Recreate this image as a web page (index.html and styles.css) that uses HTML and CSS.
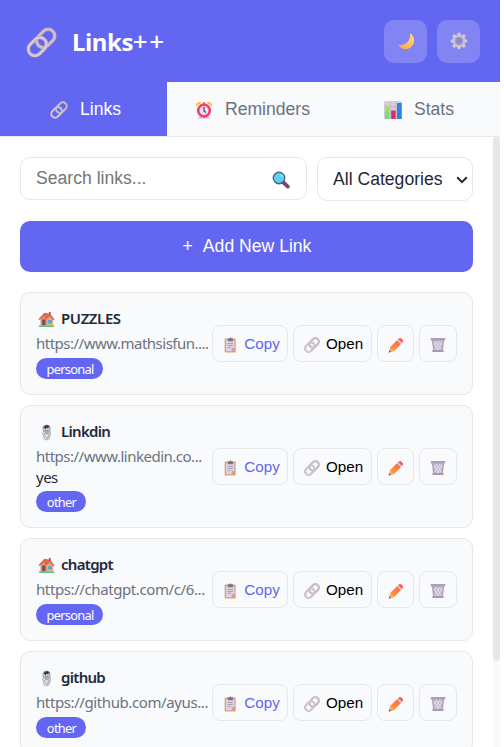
FILE: index.html
```html
<!DOCTYPE html>
<html lang="en">
<head>
<meta charset="utf-8">
<title>Links++</title>
<link rel="stylesheet" href="styles.css">
</head>
<body>
<svg class="sprite" aria-hidden="true">
  <defs>
    <linearGradient id="g-moon" x1="1" y1="0" x2="0" y2="1"><stop offset="0" stop-color="#ffe07a"/><stop offset="1" stop-color="#ff9d4a"/></linearGradient>
    <linearGradient id="g-green" x1="0" y1="0" x2="0" y2="1"><stop offset="0" stop-color="#b5dd55"/><stop offset="1" stop-color="#5de08c"/></linearGradient>
    <linearGradient id="g-pencil" x1="1" y1="0" x2="0" y2="1"><stop offset="0" stop-color="#ff5a4e"/><stop offset="1" stop-color="#ffa23a"/></linearGradient>
  </defs>
  <symbol id="link" viewBox="0 0 30 30">
    <g fill="none">
      <rect x="9.200" y="4.600" width="19.600" height="12.800" rx="6.400" transform="rotate(-45 19 11)" stroke="#b3a5b8" stroke-width="3.500"/>
      <rect x="9.200" y="4.600" width="19.600" height="12.800" rx="6.400" transform="rotate(-45 19 11)" stroke="#cbbecd" stroke-width="2.400"/>
      <rect x="1.200" y="12.600" width="19.600" height="12.800" rx="6.400" transform="rotate(-45 11 19)" stroke="#b3a5b8" stroke-width="3.500"/>
      <rect x="1.200" y="12.600" width="19.600" height="12.800" rx="6.400" transform="rotate(-45 11 19)" stroke="#d6cbd7" stroke-width="2.400"/>
    </g>
  </symbol>
  <symbol id="moon" viewBox="0 0 18 18"><path d="M13.200 1.200A8.600 8.600 0 1 1 1 12.600C8 14.400 14 9 13.200 1.200Z" fill="url(#g-moon)"/></symbol>
  <symbol id="gear" viewBox="0 0 18 18">
    <g stroke="#d3cadd" stroke-width="3.600" stroke-linecap="round"><path d="M9 2.400v13.200M2.400 9h13.200M4.200 4.200l9.600 9.600M13.800 4.200l-9.600 9.600"/></g>
    <circle cx="9" cy="9" r="6.300" fill="#cbc1d7"/><circle cx="9" cy="9" r="3.100" fill="#8486f3" stroke="#9d92ae" stroke-width="1.700"/>
  </symbol>
  <symbol id="clock" viewBox="0 0 18 18">
    <path d="M2.500 17.500l3-3h7l3 3z" fill="#d8b6e5"/>
    <path d="M.8 5.800C0 3 2.500.4 6.500 1.200ZM17.200 5.800C18 3 15.500.4 11.500 1.200Z" fill="#f9bd3b"/>
    <path d="M8 1h2v3H8z" fill="#e9a03b"/>
    <circle cx="9" cy="9.500" r="5.800" fill="#eee2f2" stroke="#f5416c" stroke-width="2.700"/>
    <path d="M9 6v4l1.800 1.500" fill="none" stroke="#514360" stroke-width="1.300"/>
  </symbol>
  <symbol id="chart" viewBox="0 0 18 18">
    <rect width="18" height="18" rx="1" fill="#d6cddd"/><path d="M0 6h18M0 12h18M6.500 0v18M12 0v18" stroke="#bfb2c8" stroke-width=".8"/>
    <rect x="1" y="4.500" width="4.500" height="13.500" fill="url(#g-green)"/><rect x="7.200" y="9.500" width="4.500" height="8.500" fill="#e0296f"/><rect x="13" y="2" width="4.700" height="16" fill="#2688e4"/>
  </symbol>
  <symbol id="search" viewBox="0 0 18 18">
    <path d="M11.500 11.500l4.300 4.100" stroke="#80437f" stroke-width="3.800" stroke-linecap="round"/>
    <circle cx="7" cy="7" r="5.700" fill="#5fd1ee" stroke="#47648f" stroke-width="1.400"/><path d="M9 3.500l2 2" stroke="#aeeafd" stroke-width="1.300"/>
  </symbol>
  <symbol id="clipboard" viewBox="0 0 16 18">
    <rect x="2" y="1.800" width="12.400" height="15.600" rx="1" fill="#df9e70"/><path d="M3.500 3.300h9.500v9L9.800 16H3.500z" fill="#ddd4e8"/><path d="M9.800 16v-3.700H13z" fill="#b6a3c6"/>
    <path d="M5.300 7.300h6M5.300 9.500h6M5.300 11.700h3.600" stroke="#9f91af" stroke-width=".9"/><path d="M5.500 1.800h1.600L8 .6h1l.8 1.200h1.600v3H5.500z" fill="#7c7085"/>
  </symbol>
  <symbol id="pencil" viewBox="0 0 18 18">
    <path d="M2.200 11.600l8.700-8.700 4.300 4.300-8.700 8.700z" fill="url(#g-pencil)"/><path d="M10 3.800l1.400-1.400 4.300 4.300-1.400 1.400z" fill="#d9c8da"/><path d="M11.400 2.400l1-.9q1.200-1 2.300 0l1.900 1.900q1 1.200 0 2.300l-1 1z" fill="#ff5b55"/>
    <path d="M2.200 11.600l4.300 4.300-5.500 1.400z" fill="#f3a563"/><path d="M1.500 15.200l1.600 1.600-2.400.7z" fill="#53435c"/>
  </symbol>
  <symbol id="trash" viewBox="0 0 18 18">
    <path d="M2 3.500h14L14.500 16h-11z" fill="#c2b8ce"/><path d="M4 6l7 10M7 5l6 9M11 5l3 4M14 6L7 16M11 5l-6 9M7 5L4.500 9" stroke="#ece7f1" stroke-width=".9"/>
    <path d="M3 4l1.500 11M15 4l-1.500 11" stroke="#9f95ae" stroke-width=".9"/><rect x=".8" y="1" width="16.400" height="2.800" rx=".7" fill="#aaa0b8"/><rect x="2.600" y="14.700" width="12.800" height="2.300" rx=".8" fill="#a69bb3"/>
  </symbol>
  <symbol id="house" viewBox="0 0 18 18">
    <rect x=".8" y="15" width="16.400" height="1.900" rx=".8" fill="#5bc486"/><path d="M2.600 7L7 3.500 15.900 8v7.300H2.600z" fill="#d99768"/><path d="M9 9l3.500-2.600L16 9v6.300H9z" fill="#e8aa7c"/>
    <rect x="4.400" y="9" width="3.500" height="6" fill="#775066"/><rect x="10.800" y="9.500" width="3.700" height="3.500" fill="#42abd9"/>
    <path d="M.5 8.400L6.800 1.800l6 1 4.700 6.200-1.200.8-4.200-4L8.500 9 6.700 5.400 1.500 9.400z" fill="#dc6650"/><path d="M11.500 1h2v3h-2z" fill="#a56052"/>
  </symbol>
  <symbol id="paperclip" viewBox="0 0 18 18">
    <path d="M5 9.500L6.600 16q2.400 1.800 4.800 0l2-6-1-4H6.500z" fill="#e5e6e8" stroke="#999ca2" stroke-width=".8"/>
    <path d="M7 12l1-4 1.500 3 1.500-3 .8 3-2 4.500z" fill="none" stroke="#8b8e95" stroke-width=".8"/>
    <ellipse cx="9" cy="4.800" rx="3.900" ry="3.700" fill="#d3d4d6" stroke="#85888e" stroke-width=".8"/><path d="M6 3.500q1.500-2.600 4-2.200 2 .2 2.700 2.300l-1.700-.7v2L9.300 3.700 8 5.500z" fill="#303238"/><path d="M7.300 6.200q1.500 1.800 3.500 0" stroke="#777" fill="none"/>
  </symbol>
</svg>
<div class="app">
  <header class="header">
    <svg class="logo"><use href="#link"/></svg>
    <h1>Links<span class="plus">++</span></h1>
    <div class="header-actions">
      <button class="round" aria-label="Dark mode"><svg class="icon"><use href="#moon"/></svg></button>
      <button class="round" aria-label="Settings"><svg class="icon"><use href="#gear"/></svg></button>
    </div>
  </header>
  <nav class="tabs">
    <button class="tab active"><svg class="icon"><use href="#link"/></svg><span>Links</span></button>
    <button class="tab"><svg class="icon"><use href="#clock"/></svg><span>Reminders</span></button>
    <button class="tab"><svg class="icon"><use href="#chart"/></svg><span>Stats</span></button>
  </nav>
  <div class="scroller">
    <main class="content">
      <div class="filters">
        <div class="search"><span>Search links...</span><svg class="icon"><use href="#search"/></svg></div>
        <div class="select"><span>All Categories</span><svg class="chevron" viewBox="0 0 12 8"><path d="M1.200 1.300L6 6.100l4.800-4.800"/></svg></div>
      </div>
      <button class="add"><span>+</span><span>Add New Link</span></button>
      <section class="list">
        <article class="card">
          <div class="info">
            <div class="name"><svg><use href="#house"/></svg><span class="n-puzzles">PUZZLES</span></div>
            <div class="url u-maths">https://www.mathsisfun....</div>
            <span class="tag personal">personal</span>
          </div>
          <div class="actions">
            <button class="btn copy"><svg><use href="#clipboard"/></svg><span>Copy</span></button>
            <button class="btn open"><svg><use href="#link"/></svg><span>Open</span></button>
            <button class="btn edit" aria-label="Edit"><svg><use href="#pencil"/></svg></button>
            <button class="btn del" aria-label="Delete"><svg><use href="#trash"/></svg></button>
          </div>
        </article>
        <article class="card">
          <div class="info">
            <div class="name"><svg><use href="#paperclip"/></svg><span>Linkdin</span></div>
            <div class="url u-linkedin">https://www.linkedin.co...</div>
            <div class="note">yes</div>
            <span class="tag other">other</span>
          </div>
          <div class="actions">
            <button class="btn copy"><svg><use href="#clipboard"/></svg><span>Copy</span></button>
            <button class="btn open"><svg><use href="#link"/></svg><span>Open</span></button>
            <button class="btn edit" aria-label="Edit"><svg><use href="#pencil"/></svg></button>
            <button class="btn del" aria-label="Delete"><svg><use href="#trash"/></svg></button>
          </div>
        </article>
        <article class="card">
          <div class="info">
            <div class="name"><svg><use href="#house"/></svg><span>chatgpt</span></div>
            <div class="url">https://chatgpt.com/c/6...</div>
            <span class="tag personal">personal</span>
          </div>
          <div class="actions">
            <button class="btn copy"><svg><use href="#clipboard"/></svg><span>Copy</span></button>
            <button class="btn open"><svg><use href="#link"/></svg><span>Open</span></button>
            <button class="btn edit" aria-label="Edit"><svg><use href="#pencil"/></svg></button>
            <button class="btn del" aria-label="Delete"><svg><use href="#trash"/></svg></button>
          </div>
        </article>
        <article class="card">
          <div class="info">
            <div class="name"><svg><use href="#paperclip"/></svg><span>github</span></div>
            <div class="url">https://github.com/ayus...</div>
            <span class="tag other">other</span>
          </div>
          <div class="actions">
            <button class="btn copy"><svg><use href="#clipboard"/></svg><span>Copy</span></button>
            <button class="btn open"><svg><use href="#link"/></svg><span>Open</span></button>
            <button class="btn edit" aria-label="Edit"><svg><use href="#pencil"/></svg></button>
            <button class="btn del" aria-label="Delete"><svg><use href="#trash"/></svg></button>
          </div>
        </article>
      </section>
    </main>
    <div class="track"><div class="thumb"></div></div>
  </div>
</div>
</body>
</html>
```
FILE: styles.css
```css
* { box-sizing: border-box; }
html, body { margin: 0; height: 100%; overflow: hidden; background: #fff; }
body { font-family: "Noto Sans", sans-serif; color: #1f2937; }
button { font-family: "Liberation Sans", sans-serif; border: 0; margin: 0; padding: 0; display: flex; align-items: center; }
svg { flex: none; display: block; }
.sprite { position: absolute; width: 0; height: 0; }
.icon { width: 18px; height: 18px; }
.app { width: 500px; height: 747px; display: flex; flex-direction: column; overflow: hidden; }
.header { height: 82px; flex: none; background: #6366f1; display: flex; align-items: center; padding: 0 20px 0 26px; color: #fff; }
.logo { width: 31px; height: 31px; margin-top: 2px; }
h1 { margin: 1px 0 0 15px; font-size: 24px; line-height: 32px; font-weight: 700; letter-spacing: -.4px; }
.plus { font-size: 26px; line-height: 26px; font-weight: 500; letter-spacing: 1.700px; margin-left: -.5px; }
.header-actions { margin-left: auto; display: flex; gap: 10px; }
.round { width: 43px; height: 43px; border-radius: 10px; background: rgba(255,255,255,.2); justify-content: center; }
.tabs { height: 55px; flex: none; display: grid; grid-template-columns: 167px 167px 166px; background: #f9fafc; border-bottom: 1px solid #e5e7eb; }
.tab { background: transparent; color: #6b7280; font-size: 17.6px; gap: 12px; justify-content: center; padding-left: 4px; }
.tab .icon { margin-top: 2px; }
.tab.active { background: #6366f1; color: #fff; }
.scroller { flex: 1; min-height: 0; display: flex; }
.content { width: 493px; padding: 20px 20px 0; overflow: hidden; }
.track { width: 7px; background: #f9fafc; }
.thumb { height: 524px; background: #e5e7eb; border-radius: 4px; }
.filters { display: flex; gap: 10px; height: 44px; align-items: flex-start; margin-bottom: 20px; font: 17.6px "Liberation Sans", sans-serif; }
.search, .select { border: 1px solid #e5e7eb; border-radius: 10px; display: flex; align-items: center; justify-content: space-between; background: #fff; white-space: nowrap; }
.search { width: 287px; height: 43px; padding: 0 16px 0 15px; color: #757575; }
.search .icon { margin-top: 3px; }
.select { width: 156px; height: 44px; padding: 0 4px 0 15px; }
.chevron { width: 12px; height: 8px; fill: none; stroke: #1f2937; stroke-width: 2; margin-top: 2px; }
.add { width: 453px; height: 51px; border-radius: 10px; background: #6366f1; color: #fff; font-size: 17.6px; justify-content: center; gap: 10px; padding-left: 1px; margin-bottom: 20px; }
.list { display: flex; flex-direction: column; gap: 10px; }
.card { display: flex; align-items: center; justify-content: space-between; padding: 15px; border: 1px solid #e5e7eb; border-radius: 10px; background: #f9fafc; }
.info { width: 173px; white-space: nowrap; }
.name { height: 20px; display: flex; align-items: center; gap: 6px; padding-left: 2px; margin-bottom: 5px; font-size: 15px; font-weight: 600; letter-spacing: -.7px; }
.name svg { width: 17px; height: 17px; margin-top: 2px; }
.n-puzzles { letter-spacing: -.4px; }
.url, .note { height: 20px; line-height: 20px; font-size: 15px; }
.url { color: #6b7280; letter-spacing: -.4px; }
.u-maths, .u-linkedin { letter-spacing: -.5px; }
.note { line-height: 22px; letter-spacing: -.5px; }
.tag { display: flex; align-items: center; justify-content: center; height: 21px; margin-top: 5px; padding: 1px 0 0 1px; border-radius: 11px; background: #6366f1; color: #fff; font-size: 12.8px; letter-spacing: -.7px; }
.personal { width: 67px; }
.other { width: 50px; }
.actions { display: flex; gap: 5px; }
.btn { height: 37px; border: 1px solid #e5e7eb; border-radius: 8px; background: #f9fafc; justify-content: center; font-size: 15.2px; color: #000; }
.btn svg { width: 16px; height: 16px; margin-top: 2px; }
.copy { width: 76px; color: #6366f1; gap: 6px; padding-left: 2px; }
.open { width: 79px; gap: 6px; padding-left: 2px; }
.edit { width: 37px; }
.del { width: 38px; }
```
